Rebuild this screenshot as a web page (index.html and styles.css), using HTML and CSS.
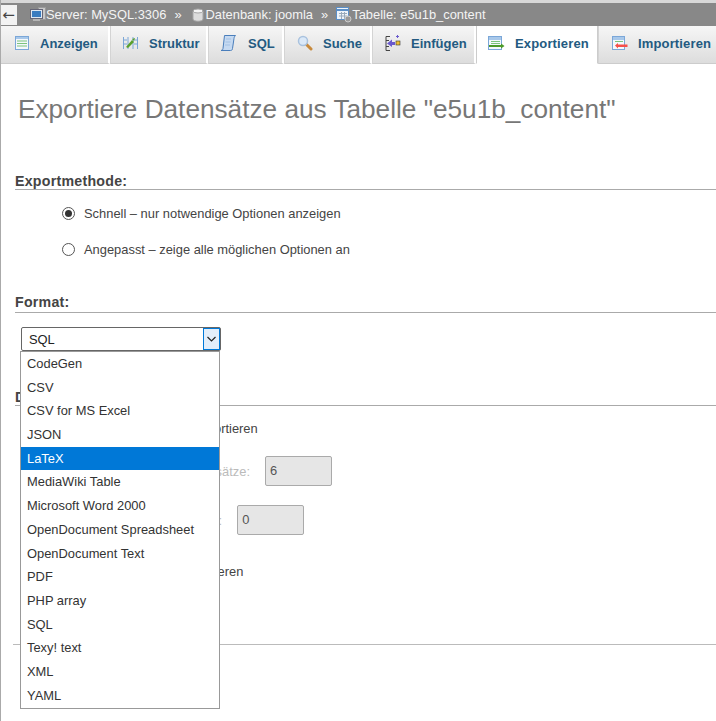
FILE: index.html
```html
<!DOCTYPE html>
<html lang="de">
<head>
    <meta charset="UTF-8">
    <title>Exportiere Datensätze</title>
    <link rel="stylesheet" href="styles.css">
</head>
<body>
    <div class="topbar">
        <div class="back">&#8592;</div>
        <div class="crumb crumb-server">
            <svg width="16" height="15" viewBox="0 0 16 15"><rect x="8.500" y="0.500" width="7" height="12" fill="#c8c8c8" stroke="#9a9a9a"/><rect x="0.500" y="2.500" width="12" height="9" fill="#dfe8f2" stroke="#667"/><rect x="2" y="4" width="9" height="6" fill="#3a7cc0"/><rect x="3" y="12" width="7" height="2" fill="#b5b5b5"/></svg>
            <span>Server: MySQL:3306</span>
        </div>
        <span class="sep">»</span>
        <div class="crumb">
            <svg width="16" height="14" viewBox="0 0 16 14"><path d="M3 3v8c0 3 10 3 10 0V3z" fill="#dcdcdc" stroke="#a5a5a5"/><ellipse cx="8" cy="3" rx="5" ry="2" fill="#f4f4f4" stroke="#a5a5a5"/></svg>
            <span>Datenbank: joomla</span>
        </div>
        <span class="sep">»</span>
        <div class="crumb">
            <svg width="16" height="16" viewBox="0 0 16 16"><rect x="0.500" y="0.500" width="12" height="12" fill="#eef4fa" stroke="#5b8fc7"/><path d="M1 3h11" stroke="#5b8fc7" stroke-width="2"/><path d="M3 6.500h8M3 9h8M5.500 5v7M8.500 5v7" stroke="#9ab"/><circle cx="12" cy="12" r="3" fill="#999" stroke="#ccc"/></svg>
            <span>Tabelle: e5u1b_content</span>
        </div>
    </div>

    <div class="tabs">
        <a class="tab tab-anzeigen">
            <svg width="16" height="16" viewBox="0 0 16 16"><rect x="1.500" y="1.500" width="13" height="13" fill="#f4f8fc" stroke="#7ba7d8"/><path d="M2 2h12v2H2z" fill="#a8c8ea"/><path d="M3 6h10M3 8.500h10M3 11h10" stroke="#7cc47c"/></svg>
            Anzeigen
        </a>
        <a class="tab tab-struktur">
            <svg width="17" height="16" viewBox="0 0 17 16"><path d="M1.500 2v12M6 2v12M11 2v12M15.500 2v12" stroke="#7ba7d8"/><path d="M1 5h4M1 9h4M12 5h4M12 9h4" stroke="#7ba7d8"/><path d="M4 12l6-7 2 2-6 6z" fill="#5aa02c"/><path d="M10 4l3-1-1 3z" fill="#5aa02c"/></svg>
            Struktur
        </a>
        <a class="tab tab-sql">
            <svg width="17" height="18" viewBox="0 0 17 18"><path d="M4.500 1.500h11c-1 1-1.500 2-1.500 3l-1.500 10c0 1.500-1 2-2 2H1c1.500-.5 2-1 2-2z" fill="#c5d9f1" stroke="#4a7ebb"/><path d="M6 5h5M5.500 8h5M5 11h5" stroke="#a3c1e4"/></svg>
            SQL
        </a>
        <a class="tab tab-suche">
            <svg width="16" height="16" viewBox="0 0 16 16"><path d="M9 9l5 5" stroke="#c88a3c" stroke-width="3" stroke-linecap="round"/><circle cx="6" cy="6" r="4.500" fill="#dbe9f8" stroke="#a9c2de" stroke-width="1.500"/></svg>
            Suche
        </a>
        <a class="tab tab-einfuegen">
            <svg width="16" height="17" viewBox="0 0 16 17"><path d="M5 1.500H1v14h4M1 5.500h3M1 11.500h3" fill="none" stroke="#444"/><path d="M2 8.500l5-4v2.500h3v3H7V12z" fill="#6a5acd"/><rect x="11" y="6" width="4" height="4" fill="#f0c030" stroke="#333" stroke-width=".6"/><path d="M12.500 0v3M11 1.500h3" stroke="#6a5acd"/></svg>
            Einfügen
        </a>
        <a class="tab tab-exportieren active">
            <svg width="17" height="15" viewBox="0 0 17 15"><rect x="0.500" y="0.500" width="13" height="13" fill="#f4f8fc" stroke="#7ba7d8"/><path d="M1 2.500h12" stroke="#a8c8ea" stroke-width="3"/><path d="M3 5.500h9M3 7.500h9" stroke="#7cc47c"/><path d="M1 9h12v-1.500l3.500 2.500-3.500 2.500V11H1z" fill="#4c9a2a"/></svg>
            Exportieren
        </a>
        <a class="tab tab-importieren">
            <svg width="16" height="15" viewBox="0 0 16 15"><rect x="0.500" y="0.500" width="12" height="13" fill="#f4f8fc" stroke="#7ba7d8"/><path d="M1 2.500h11" stroke="#a8c8ea" stroke-width="3"/><path d="M3 5.500h8" stroke="#7cc47c"/><path d="M3 9.500l3-2.500v1.500h9.500v2.500H6V12.500z" fill="#f5504a"/></svg>
            Importieren
        </a>
    </div>

    <div class="page">
        <h2 class="title">Exportiere Datensätze aus Tabelle "e5u1b_content"</h2>

        <section class="block block-method">
            <h3 class="legend">Exportmethode:</h3>
            <label class="radio-row">
                <span class="radio checked"></span>
                Schnell – nur notwendige Optionen anzeigen
            </label>
            <label class="radio-row">
                <span class="radio"></span>
                Angepasst – zeige alle möglichen Optionen an
            </label>
        </section>

        <section class="block block-format">
            <h3 class="legend">Format:</h3>
            <div class="select-wrap">
                <div class="select">
                    <span class="select-value">SQL</span>
                    <span class="select-arrow">
                        <svg width="9" height="6" viewBox="0 0 9 6"><path d="M.5 1l4 4 4-4" fill="none" stroke="#222" stroke-width="1.200"/></svg>
                    </span>
                </div>
                <ul class="menu">
                    <li>CodeGen</li>
                    <li>CSV</li>
                    <li>CSV for MS Excel</li>
                    <li>JSON</li>
                    <li class="selected">LaTeX</li>
                    <li>MediaWiki Table</li>
                    <li>Microsoft Word 2000</li>
                    <li>OpenDocument Spreadsheet</li>
                    <li>OpenDocument Text</li>
                    <li>PDF</li>
                    <li>PHP array</li>
                    <li>SQL</li>
                    <li>Texy! text</li>
                    <li>XML</li>
                    <li>YAML</li>
                </ul>
            </div>
        </section>

        <section class="block block-rows">
            <h3 class="legend">Datensätze:</h3>
            <p class="rows-line rows-first">Einige Datensätze exportieren</p>
            <p class="rows-line rows-count">Anzahl der Datensätze: <span class="num-box">6</span></p>
            <p class="rows-line rows-start">Beginne bei Zeile: <span class="num-box">0</span></p>
            <p class="rows-line rows-last">Alle Datensätze exportieren</p>
        </section>

        <div class="footer-rule"></div>
    </div>
</body>
</html>
```

FILE: styles.css
```css
/* General Styles */
html, body {
    height: 100%;
}
body {
    margin: 0;
    font-family: "Liberation Sans", Arial, sans-serif;
    font-size: 12.900px;
    color: #444;
    background-color: #fff;
    border-left: 1px solid #aaa;
    overflow: hidden;
}

/* Top bar */
.topbar {
    display: flex;
    align-items: center;
    height: 23px;
    margin-left: -1px;
    border-top: 3px solid #d8d8d8;
    background-color: #888;
    color: #f4f4f4;
    font-size: 12.900px;
    white-space: nowrap;
}
.back {
    width: 17px;
    height: 20px;
    margin-right: 13px;
    background-color: #f3f3f3;
    color: #444;
    font-family: "DejaVu Sans", sans-serif;
    font-size: 15px;
    line-height: 20px;
    text-align: center;
}
.crumb {
    display: flex;
    align-items: center;
}
.sep {
    margin: 0 8px;
}

/* Tabs */
.tabs {
    display: flex;
    height: 38px;
    overflow: hidden;
    background: linear-gradient(#f6f6f6, #dcdcdc);
}
.tab {
    display: flex;
    align-items: center;
    flex: none;
    gap: 10px;
    height: 38px;
    box-sizing: border-box;
    padding-bottom: 3px;
    border-right: 2px solid #fff;
    border-bottom: 1px solid #ccc;
    border-left: 1px solid #d4d4d4;
    color: #235a81;
    font-size: 13px;
    font-weight: bold;
    white-space: nowrap;
}
.tab svg {
    flex: none;
}
.tab-anzeigen { width: 109px; padding-left: 13px; border-left: 0; }
.tab-struktur { width: 98px; padding-left: 11px; }
.tab-sql { width: 76px; padding-left: 11px; gap: 11px; }
.tab-suche { width: 88px; padding-left: 12px; }
.tab-einfuegen { width: 104px; padding-left: 12px; }
.tab-exportieren { width: 122px; padding-left: 11px; letter-spacing: 0.150px; }
.tab-importieren { width: 130px; padding-left: 13px; letter-spacing: 0.150px; }
.tab.active {
    background-color: #fff;
    border-bottom-color: #fff;
    border-left: 1px solid #ccc;
    border-right: 1px solid #ccc;
}

/* Page content */
.page {
    padding: 0 0 0 14px;
}
.title {
    margin: 0 0 0 3px;
    padding-top: 29px;
    color: #777;
    font-size: 26.200px;
    font-weight: normal;
    line-height: 32px;
}
.block {
    margin: 0;
}
.legend {
    margin: 0;
    border-bottom: 1px solid #aaa;
    color: #444;
    font-size: 14.200px;
    font-weight: bold;
    letter-spacing: 0.250px;
    line-height: 16px;
}
.block-method {
    padding-top: 48px;
}
.radio-row {
    display: flex;
    align-items: center;
    gap: 9px;
    height: 36px;
    margin-left: 47px;
}
.block-method .legend {
    margin-bottom: 5px;
}
.radio {
    box-sizing: border-box;
    width: 13px;
    height: 13px;
    border: 1px solid #555;
    border-radius: 50%;
    background-color: #fff;
}
.radio.checked {
    padding: 2px;
    background-clip: content-box;
    background-color: #333;
}
.block-format {
    padding-top: 27px;
}
.block-format .legend {
    padding-bottom: 2px;
}

/* Select and its open list */
.select-wrap {
    position: relative;
    z-index: 2;
    width: 200px;
    margin: 14px 0 0 6px;
}
.select {
    display: flex;
    align-items: center;
    box-sizing: border-box;
    height: 24px;
    border: 1px solid #666;
    border-radius: 2px;
    background-color: #fff;
    color: #222;
}
.select-value {
    flex: 1;
    padding-left: 7px;
}
.select-arrow {
    display: flex;
    align-items: center;
    justify-content: center;
    width: 17px;
    height: 22px;
    box-sizing: border-box;
    border: 1px solid #0078d7;
    background-color: #e3eefa;
}
.menu {
    position: absolute;
    top: 24px;
    left: -1px;
    box-sizing: border-box;
    width: 200px;
    height: 358px;
    margin: 0;
    padding: 0;
    list-style: none;
    border: 1px solid #999;
    background-color: #fff;
    color: #333;
}
.menu li {
    height: 23.700px;
    line-height: 24.400px;
    padding-left: 6px;
    white-space: nowrap;
}
.menu li.selected {
    background-color: #0078d7;
    color: #fff;
}

/* Rows section, mostly hidden by the open list */
.block-rows {
    padding-top: 38px;
}
.rows-line {
    display: flex;
    align-items: center;
    gap: 15px;
    margin: 0;
    white-space: nowrap;
}
.rows-first {
    height: 14px;
    margin: 15px 0 0 70px;
}
.rows-count {
    margin: 21px 0 0 101px;
    color: #bbb;
}
.rows-start {
    margin: 19px 0 0 104px;
    color: #bbb;
}
.rows-last {
    height: 14px;
    margin: 29px 0 0 70px;
}
.num-box {
    box-sizing: border-box;
    width: 67px;
    height: 30px;
    padding: 0 4px;
    border: 1px solid #aaa;
    border-radius: 2px;
    background-color: #e6e6e6;
    color: #555;
    line-height: 28px;
}
.footer-rule {
    height: 1px;
    margin: 66px 0 0 -2px;
    background-color: #bbb;
}
```
